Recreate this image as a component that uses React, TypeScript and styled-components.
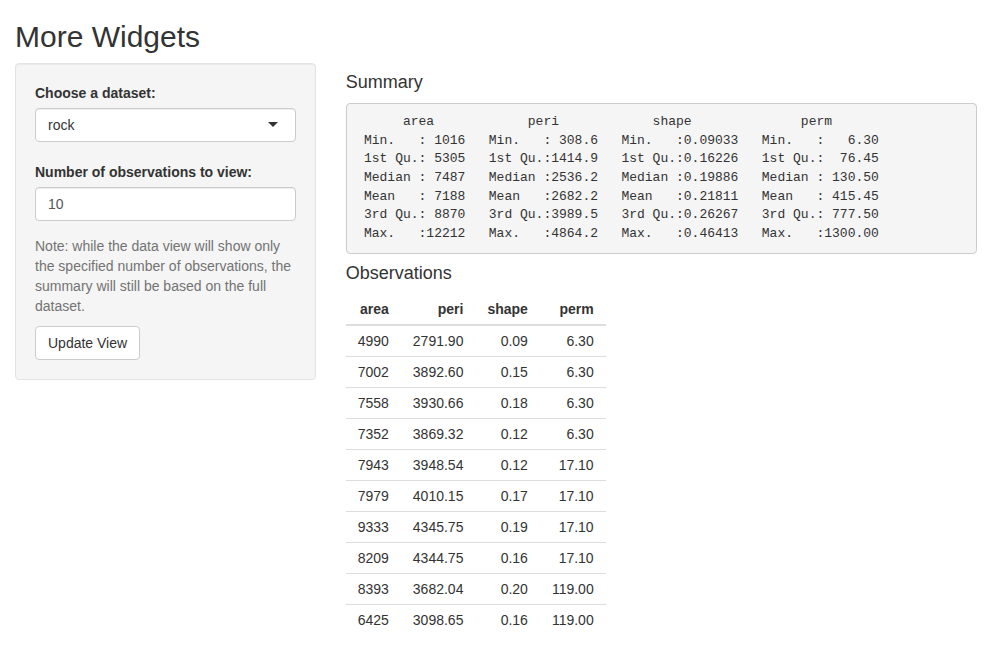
import styled, { createGlobalStyle } from "styled-components";

const GlobalStyle = createGlobalStyle`
    html, body {
        margin: 0;
        padding: 0;
        background: #fff;
    }
    body {
        font-family: "Liberation Sans", Arial, Helvetica, sans-serif;
        font-size: 14px;
        line-height: 1.42857143;
        color: #333;
    }
    * {
        box-sizing: border-box;
    }
`;

const summaryText = [
    "      area            peri            shape              perm        ",
    " Min.   : 1016   Min.   : 308.6   Min.   :0.09033   Min.   :   6.30  ",
    " 1st Qu.: 5305   1st Qu.:1414.9   1st Qu.:0.16226   1st Qu.:  76.45  ",
    " Median : 7487   Median :2536.2   Median :0.19886   Median : 130.50  ",
    " Mean   : 7188   Mean   :2682.2   Mean   :0.21811   Mean   : 415.45  ",
    " 3rd Qu.: 8870   3rd Qu.:3989.5   3rd Qu.:0.26267   3rd Qu.: 777.50  ",
    " Max.   :12212   Max.   :4864.2   Max.   :0.46413   Max.   :1300.00  ",
].join("\n");

const columns = ["area", "peri", "shape", "perm"];

const rows = [
    ["4990", "2791.90", "0.09", "6.30"],
    ["7002", "3892.60", "0.15", "6.30"],
    ["7558", "3930.66", "0.18", "6.30"],
    ["7352", "3869.32", "0.12", "6.30"],
    ["7943", "3948.54", "0.12", "17.10"],
    ["7979", "4010.15", "0.17", "17.10"],
    ["9333", "4345.75", "0.19", "17.10"],
    ["8209", "4344.75", "0.16", "17.10"],
    ["8393", "3682.04", "0.20", "119.00"],
    ["6425", "3098.65", "0.16", "119.00"],
];

const App = () => {
    return (
        <>
            <GlobalStyle />
            <Container>
                <Title>More Widgets</Title>
                <Row>
                    <Sidebar>
                        <Well>
                            <FormGroup>
                                <Label>Choose a dataset:</Label>
                                <SelectBox>
                                    <span>rock</span>
                                    <Caret />
                                </SelectBox>
                            </FormGroup>
                            <FormGroup>
                                <Label>Number of observations to view:</Label>
                                <NumberInput type="number" defaultValue={10} />
                            </FormGroup>
                            <HelpText>
                                Note: while the data view will show only the specified number of observations, the summary will still be based on the full dataset.
                            </HelpText>
                            <Button>Update View</Button>
                        </Well>
                    </Sidebar>
                    <Main>
                        <SectionTitle>Summary</SectionTitle>
                        <Pre>{summaryText}</Pre>
                        <SectionTitle>Observations</SectionTitle>
                        <Table>
                            <thead>
                                <tr>
                                    {columns.map((c) => (
                                        <Th key={c}>{c}</Th>
                                    ))}
                                </tr>
                            </thead>
                            <tbody>
                                {rows.map((r, i) => (
                                    <tr key={i}>
                                        {r.map((v, j) => (
                                            <Td key={j}>{v}</Td>
                                        ))}
                                    </tr>
                                ))}
                            </tbody>
                        </Table>
                    </Main>
                </Row>
            </Container>
        </>
    );
};

export default App;

const Container = styled.div`
    padding: 0 15px;
`;

const Title = styled.h2`
    font-size: 30px;
    font-weight: 500;
    line-height: 1.1;
    margin: 20px 0 10px;
    color: #333;
`;

const Row = styled.div`
    display: flex;
    margin: 0 -15px;
`;

const Sidebar = styled.div`
    flex: 0 0 33.33333333%;
    padding: 0 15px;
`;

const Main = styled.div`
    flex: 0 0 66.66666667%;
    padding: 0 15px;
`;

const Well = styled.div`
    background-color: #f5f5f5;
    border: 1px solid #e3e3e3;
    border-radius: 4px;
    box-shadow: inset 0 1px 1px rgba(0, 0, 0, 0.05);
    padding: 19px;
    margin-bottom: 20px;
`;

const FormGroup = styled.div`
    margin-bottom: 15px;
    & + & {
        margin-top: 20px;
    }
`;

const Label = styled.label`
    display: block;
    font-weight: 700;
    margin-bottom: 5px;
`;

const SelectBox = styled.div`
    position: relative;
    height: 34px;
    padding: 6px 12px;
    background: #fff;
    border: 1px solid #ccc;
    border-radius: 4px;
    box-shadow: inset 0 1px 1px rgba(0, 0, 0, 0.075);
    color: #333;
`;

const Caret = styled.span`
    position: absolute;
    top: 50%;
    right: 17px;
    margin-top: -3px;
    width: 0;
    height: 0;
    border-style: solid;
    border-width: 5px 5px 0 5px;
    border-color: #333 transparent transparent transparent;
`;

const NumberInput = styled.input`
    display: block;
    width: 100%;
    height: 34px;
    padding: 6px 12px;
    font-family: inherit;
    font-size: 14px;
    line-height: 1.42857143;
    color: #555;
    background: #fff;
    border: 1px solid #ccc;
    border-radius: 4px;
    box-shadow: inset 0 1px 1px rgba(0, 0, 0, 0.075);
    -moz-appearance: textfield;
    &::-webkit-inner-spin-button,
    &::-webkit-outer-spin-button {
        -webkit-appearance: none;
        margin: 0;
    }
    &:focus {
        outline: none;
    }
`;

const HelpText = styled.span`
    display: block;
    color: #737373;
    margin: 0 0 10px;
`;

const Button = styled.button`
    display: inline-block;
    padding: 6px 12px;
    font-family: inherit;
    font-size: 14px;
    line-height: 1.42857143;
    color: #333;
    background: #fff;
    border: 1px solid #ccc;
    border-radius: 4px;
    cursor: pointer;
`;

const SectionTitle = styled.h4`
    font-size: 18px;
    font-weight: 500;
    line-height: 1.1;
    margin: 10px 0;
    color: #333;
`;

const Pre = styled.pre`
    display: block;
    margin: 0 0 10px;
    padding: 9.5px;
    font-family: "Liberation Mono", "Courier New", monospace;
    font-size: 13px;
    line-height: 1.42857143;
    color: #333;
    background-color: #f5f5f5;
    border: 1px solid #ccc;
    border-radius: 4px;
    white-space: pre;
    overflow: hidden;
`;

const Table = styled.table`
    border-collapse: collapse;
    border-spacing: 0;
    margin: 0;
`;

const Th = styled.th`
    padding: 5px 12px;
    text-align: right;
    font-weight: 700;
    border-bottom: 2px solid #ddd;
    vertical-align: bottom;
`;

const Td = styled.td`
    padding: 5px 12px;
    text-align: right;
    border-top: 1px solid #ddd;
`;
